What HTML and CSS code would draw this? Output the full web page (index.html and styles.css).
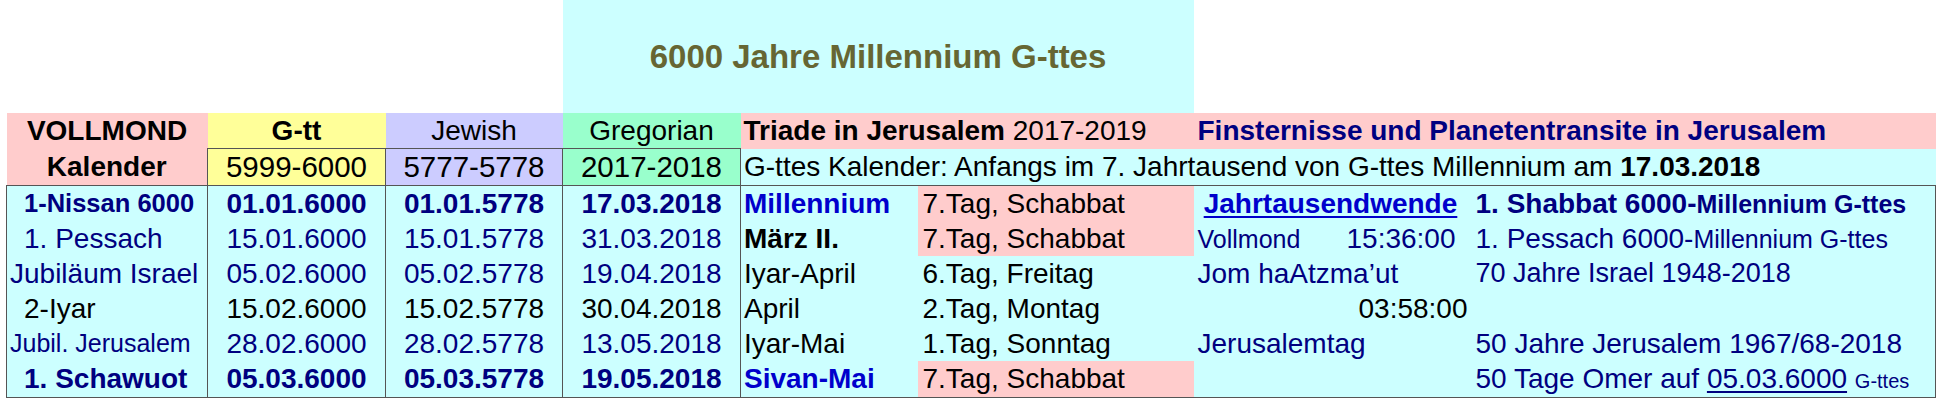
FILE: index.html
```html
<!DOCTYPE html>
<html lang="de">
<head>
<meta charset="utf-8">
<title>6000 Jahre Millennium G-ttes</title>
<link rel="stylesheet" href="styles.css">
</head>
<body>
<div class="wrap">
<table class="cal">
  <colgroup>
    <col class="w1"><col class="w2"><col class="w3"><col class="w4"><col class="w5"><col class="w6"><col class="w7"><col class="w8">
  </colgroup>
  <tr class="title-row">
    <td colspan="3"></td>
    <td colspan="3" class="cyan title">6000 Jahre Millennium G-ttes</td>
    <td colspan="2"></td>
  </tr>
  <tr class="h1">
    <td class="pink c b">VOLLMOND</td>
    <td class="yellow c b">G-tt</td>
    <td class="lav c">Jewish</td>
    <td class="mint c">Gregorian</td>
    <td colspan="2" class="pink pl"><b>Triade in Jerusalem</b> 2017-2019</td>
    <td colspan="2" class="pink fin">Finsternisse und Planetentransite in Jerusalem</td>
  </tr>
  <tr class="h2">
    <td class="pink c b">Kalender</td>
    <td class="yellow c bx yr">5999-6000</td>
    <td class="lav c bx yr">5777-5778</td>
    <td class="mint c bx yr">2017-2018</td>
    <td colspan="4" class="cyan pl">G-ttes Kalender: Anfangs im 7. Jahrtausend von G-ttes Millennium am <b class="hd">17.03.2018</b></td>
  </tr>
  <tr class="d first">
    <td class="k1 ind b navy n25">1-Nissan 6000</td>
    <td class="k c b navy">01.01.6000</td>
    <td class="k c b navy">01.01.5778</td>
    <td class="k c b navy">17.03.2018</td>
    <td class="k5 b blue">Millennium</td>
    <td class="k6 pink">7.Tag, Schabbat</td>
    <td class="k7 c"><a class="link">Jahrtausendwende</a></td>
    <td class="k8 b navy">1. Shabbat 6000-<span class="sm">Millennium G-ttes</span></td>
  </tr>
  <tr class="d">
    <td class="k1 ind navy">1. Pessach</td>
    <td class="k c navy">15.01.6000</td>
    <td class="k c navy">15.01.5778</td>
    <td class="k c navy">31.03.2018</td>
    <td class="k5 b">März II.</td>
    <td class="k6 pink">7.Tag, Schabbat</td>
    <td class="k7 navy"><div class="split"><span class="vm">Vollmond</span><span>15:36:00</span></div></td>
    <td class="k8 navy">1. Pessach 6000-<span class="sm2">Millennium G-ttes</span></td>
  </tr>
  <tr class="d">
    <td class="k1 navy">Jubiläum Israel</td>
    <td class="k c navy">05.02.6000</td>
    <td class="k c navy">05.02.5778</td>
    <td class="k c navy">19.04.2018</td>
    <td class="k5">Iyar-April</td>
    <td class="k6">6.Tag, Freitag</td>
    <td class="k7 navy">Jom haAtzma’ut</td>
    <td class="k8 navy n27">70 Jahre Israel 1948-2018</td>
  </tr>
  <tr class="d">
    <td class="k1 ind">2-Iyar</td>
    <td class="k c">15.02.6000</td>
    <td class="k c">15.02.5778</td>
    <td class="k c">30.04.2018</td>
    <td class="k5">April</td>
    <td class="k6">2.Tag, Montag</td>
    <td class="k7 r">03:58:00</td>
    <td class="k8"></td>
  </tr>
  <tr class="d">
    <td class="k1 navy n24">Jubil. Jerusalem</td>
    <td class="k c navy">28.02.6000</td>
    <td class="k c navy">28.02.5778</td>
    <td class="k c navy">13.05.2018</td>
    <td class="k5">Iyar-Mai</td>
    <td class="k6">1.Tag, Sonntag</td>
    <td class="k7 navy">Jerusalemtag</td>
    <td class="k8 navy">50 Jahre Jerusalem 1967/68-2018</td>
  </tr>
  <tr class="d last">
    <td class="k1 ind b navy">1. Schawuot</td>
    <td class="k c b navy">05.03.6000</td>
    <td class="k c b navy">05.03.5778</td>
    <td class="k c b navy">19.05.2018</td>
    <td class="k5 b blue">Sivan-Mai</td>
    <td class="k6 pink">7.Tag, Schabbat</td>
    <td class="k7"></td>
    <td class="k8 navy">50 Tage Omer auf <span class="ul">05.03.6000</span> <span class="tiny">G-ttes</span></td>
  </tr>
</table>
</div>
</body>
</html>
```

FILE: styles.css
```css
html, body {
  margin: 0;
  padding: 0;
  background: #ffffff;
}
.wrap {
  padding-left: 6px;
}
.cal {
  border-collapse: collapse;
  table-layout: fixed;
  width: 1929px;
  font-family: "Liberation Sans", Arial, sans-serif;
  font-size: 28px;
  color: #000000;
}
.w1 { width: 201px; }
.w2 { width: 178px; }
.w3 { width: 177px; }
.w4 { width: 178px; }
.w5 { width: 177px; }
.w6 { width: 276px; }
.w7 { width: 274px; }
.w8 { width: 468px; }
.cal td {
  padding: 0;
  line-height: 1;
  white-space: nowrap;
  vertical-align: middle;
  overflow: visible;
}
.title-row td { height: 113px; }
.title {
  text-align: center;
  font-weight: bold;
  font-size: 33px;
  color: #666633;
  padding-bottom: 2px;
}
.h1 td { height: 35px; font-size: 28px; }
.h2 td { height: 36px; font-size: 28px; }
.h2 td.yr { font-size: 29.5px; }
.d td { height: 35px; }
.pink { background: #ffcccc; }
.yellow { background: #ffff99; }
.lav { background: #ccccff; }
.mint { background: #99ffcc; }
.cyan { background: #ccffff; }
.d td { background-color: #ccffff; }
.d td.pink { background-color: #ffcccc; }
.c { text-align: center; }
.r { text-align: right; }
.b { font-weight: bold; }
.navy { color: #000080; }
.blue { color: #0000cc; }
.pl { padding-left: 3px !important; }
.fin {
  padding-left: 4px !important;
  font-weight: bold;
  color: #000080;
}
.hd { font-size: 28px; }
.bx {
  border-top: 1px solid #555555;
  border-left: 1px solid #555555;
  border-right: 1px solid #555555;
}
.d td.k1 { border-left: 1px solid #555555; border-right: 1px solid #555555; padding-left: 3px; }
.d td.k { border-right: 1px solid #555555; }
.d td.k8 { border-right: 1px solid #555555; padding-left: 8px; }
.d td.k5 { padding-left: 3px; }
.d td.k6 { padding-left: 5px; }
.d td.k7 { padding-left: 4px; }
.d td.k7.r { padding-right: 0; text-align: right; }
.d td.k7.c { padding-left: 0; }
.first td { border-top: 1px solid #555555; }
.last td { border-bottom: 1px solid #555555; height: 36px; }
.d td.ind { padding-left: 17px; }
.n25 { font-size: 25.5px; }
.n24 { font-size: 25px; }
.n27 { font-size: 27px; }
.link {
  color: #0000cc;
  font-weight: bold;
  text-decoration: underline;
  text-underline-offset: 3px;
}
.split {
  display: flex;
  justify-content: space-between;
  align-items: baseline;
  padding-right: 12px;
}
.vm { font-size: 25px; }
.sm { font-size: 25px; }
.sm2 { font-size: 25px; }
.tiny { font-size: 20px; }
.ul { text-decoration: underline; text-underline-offset: 3px; }
```
